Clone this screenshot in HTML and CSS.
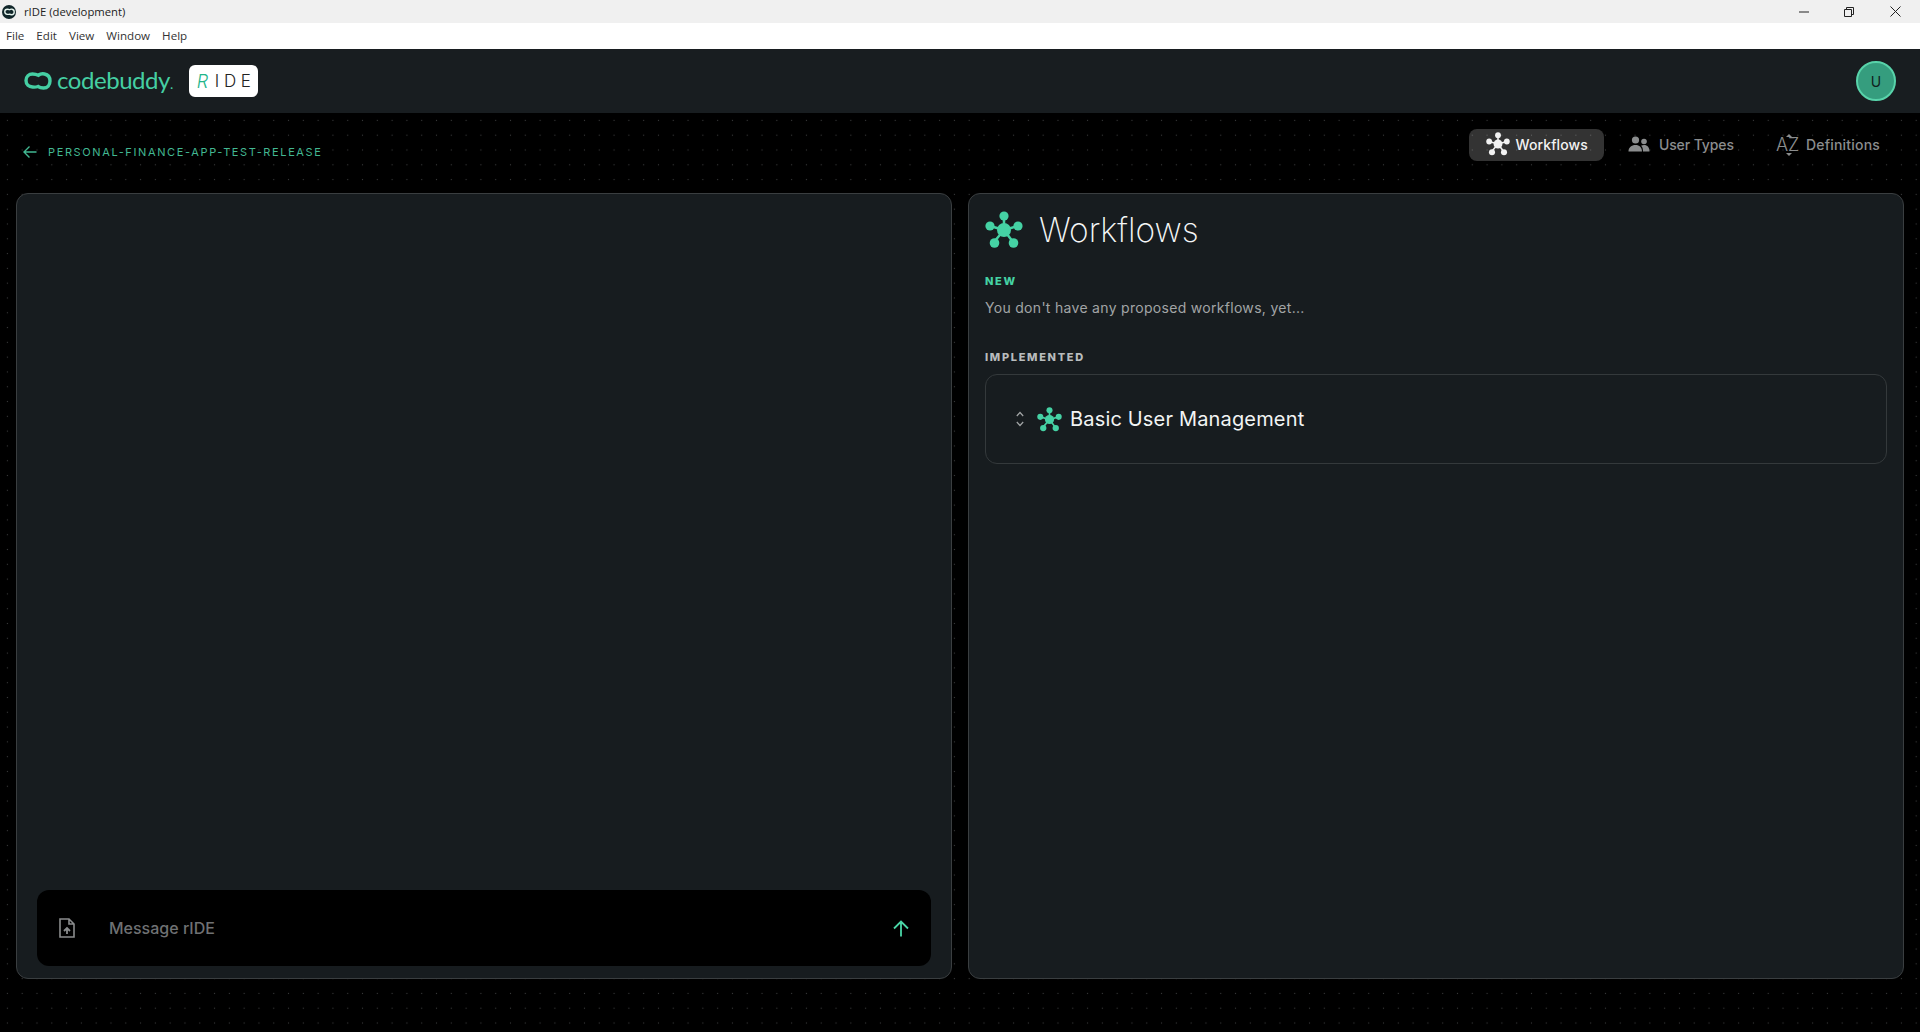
FILE: index.html
```html
<!DOCTYPE html>
<html lang="en">
  <head>
    <meta charset="UTF-8" />
    <title>rIDE (development)</title>
    <link rel="stylesheet" href="styles.css">
  </head>

  <body>
    <svg class="defs" width="0" height="0">
      <symbol id="flow" viewBox="0 0 38 38">
        <path d="M19 5V19M5 15L19 19M33 15L19 19M9 31L19 19M28 31L19 19" stroke="currentColor" stroke-width="2.5" fill="none"/>
        <circle cx="19" cy="19" r="7"/>
        <circle cx="19" cy="5" r="4.6"/>
        <circle cx="5" cy="15" r="4.6"/>
        <circle cx="33" cy="15" r="4.6"/>
        <circle cx="9.5" cy="32" r="4.8"/>
        <circle cx="28.5" cy="32" r="4.8"/>
      </symbol>
      <symbol id="loop" viewBox="0 0 28 20">
        <path d="M8.500 3C11 3 12.800 3.500 14.300 4.300C16 3 18 2.500 20.500 3C24 3.700 26 6.500 26 10C26 14 23.500 17 19.500 17C17.300 17 15.500 16.500 14 15.500C12.500 16 10.800 16.300 8.500 16C5 15.700 2 13.500 2 9.500C2 5.500 5 3 8.500 3Z" stroke="currentColor" stroke-width="3.400" fill="none"/>
      </symbol>
    </svg>

    <div class="titlebar">
      <div class="app-icon"><svg width="11" height="8"><use href="#loop"/></svg></div>
      <span class="title-text">rIDE (development)</span>
      <div class="win-btns">
        <svg width="10" height="10" viewBox="0 0 10 10"><path d="M0 5H10" stroke="#222" fill="none"/></svg>
        <svg width="10" height="10" viewBox="0 0 10 10"><path d="M0.500 2.500H7.500V9.500H0.500ZM2.500 2.500V0.500H9.500V7.500H7.500" stroke="#222" fill="none"/></svg>
        <svg class="win-close" width="11" height="11" viewBox="0 0 11 11"><path d="M0.500 0.500L10.500 10.500M10.500 0.500L0.500 10.500" stroke="#222" fill="none"/></svg>
      </div>
    </div>

    <div class="menubar">
      <span>File</span>
      <span>Edit</span>
      <span>View</span>
      <span>Window</span>
      <span>Help</span>
    </div>

    <header class="header">
      <div class="brand">
        <svg class="brand-mark" width="28" height="20"><use href="#loop"/></svg>
        <span class="brand-name">codebuddy<small>.</small></span>
        <div class="badge"><span class="badge-r">R</span>IDE</div>
      </div>
      <div class="avatar">U</div>
    </header>

    <main class="page">
      <div class="subnav">
        <a class="back">
          <svg width="14" height="14" viewBox="0 0 14 14"><path d="M13.500 7H1M6.500 1.500L1 7L6.500 12.500" stroke="currentColor" stroke-width="1.400" fill="none"/></svg>
          personal-finance-app-test-release
        </a>
        <nav class="tabs">
          <div class="tab active">
            <svg class="tab-icon" width="24" height="24"><use href="#flow"/></svg>
            Workflows
          </div>
          <div class="tab types">
            <svg class="tab-icon" width="22" height="16" viewBox="0 0 22 16">
              <circle cx="7.500" cy="4" r="3.600"/>
              <circle cx="16" cy="5.500" r="2.800"/>
              <path d="M0.500 15.500C0.500 11.500 3.500 9 7.500 9C11.500 9 14 11.500 14 15.500ZM15 15.500C15 13 14.500 11 13 9.800C14 9.200 15 9 16 9C19.500 9 21.500 11.500 21.500 15.500Z"/>
            </svg>
            User Types
          </div>
          <div class="tab defs-tab">
            <span class="az">AZ</span>
            Definitions
          </div>
        </nav>
      </div>

      <div class="panels">
        <section class="panel chat">
          <div class="composer">
            <svg class="file-icon" width="16" height="20" viewBox="0 0 16 20">
              <path d="M1 1H10L15 6V19H1Z M10 1V6H15" stroke="currentColor" stroke-width="1.600" fill="none"/>
              <path d="M8 16V10.500M5 13L8 10L11 13" stroke="currentColor" stroke-width="1.800" fill="none"/>
            </svg>
            <span class="placeholder">Message rIDE</span>
            <svg class="send" width="16" height="17" viewBox="0 0 16 17"><path d="M8 16.500V1.500M1 8.500L8 1.500L15 8.500" stroke="currentColor" stroke-width="1.800" fill="none"/></svg>
          </div>
        </section>

        <section class="panel flows">
          <div class="flows-head">
            <svg class="flows-icon" width="38" height="38"><use href="#flow"/></svg>
            <h1>Workflows</h1>
          </div>
          <h2 class="label new">New</h2>
          <p class="empty">You don't have any proposed workflows, yet...</p>
          <h2 class="label done">Implemented</h2>
          <div class="card">
            <svg class="chevrons" width="8" height="16" viewBox="0 0 8 16"><path d="M0.800 5L4 1.500L7.200 5M0.800 11L4 14.500L7.200 11" stroke="currentColor" stroke-width="1.200" fill="none"/></svg>
            <svg class="card-icon" width="25" height="25"><use href="#flow"/></svg>
            <span class="card-title">Basic User Management</span>
          </div>
        </section>
      </div>
    </main>
  </body>
</html>
```

FILE: styles.css
```css
* {
    box-sizing: border-box;
    margin: 0;
    padding: 0;
}
html, body {
    height: 100%;
}
body {
    display: flex;
    flex-direction: column;
    overflow: hidden;
    font-family: "Inter", "Liberation Sans", sans-serif;
    background-color: #000;
}
.defs {
    position: absolute;
}

/* window chrome */
.titlebar {
    height: 23px;
    flex: none;
    display: flex;
    align-items: center;
    padding-left: 2px;
    background-color: #f0f0f0;
    font-family: "Open Sans", "Liberation Sans", sans-serif;
    font-size: 11.300px;
    color: #222;
}
.app-icon {
    width: 14px;
    height: 14px;
    border-radius: 50%;
    background-color: #11262a;
    display: flex;
    align-items: center;
    justify-content: center;
    color: #e6f5ef;
}
.title-text {
    margin-left: 8px;
}
.win-btns {
    margin-left: auto;
    display: flex;
    align-items: center;
    gap: 35px;
    padding-right: 19px;
}
.win-close {
    margin-left: 1px;
}
.menubar {
    height: 26px;
    flex: none;
    display: flex;
    align-items: center;
    gap: 12px;
    padding: 0 0 2px 6px;
    background-color: #fff;
    font-family: "Open Sans", "Liberation Sans", sans-serif;
    font-size: 11.600px;
    color: #333;
}

/* app header */
.header {
    height: 64px;
    flex: none;
    display: flex;
    align-items: center;
    justify-content: space-between;
    padding: 0 24px;
    background-color: #181d20;
}
.brand {
    display: flex;
    align-items: center;
}
.brand-mark {
    color: #45cfa3;
}
.brand-name {
    margin: 0 0 4px 5px;
    font-family: "Lato", sans-serif;
    font-size: 24px;
    letter-spacing: -0.450px;
    color: #45cfa3;
}
.brand-name small {
    font-size: 14px;
}
.badge {
    width: 69px;
    height: 32px;
    margin-left: 16px;
    display: flex;
    align-items: center;
    padding-left: 8px;
    border-radius: 6px;
    background-color: #fff;
    font-size: 17px;
    font-weight: 300;
    letter-spacing: 4.600px;
    color: #222;
}
.badge-r {
    width: 18px;
    font-style: italic;
    font-size: 18px;
    letter-spacing: 0;
    color: #22b58a;
}
.avatar {
    width: 40px;
    height: 40px;
    border: 2px solid #58d3aa;
    border-radius: 50%;
    background-color: #359d7e;
    display: flex;
    align-items: center;
    justify-content: center;
    font-size: 14px;
    color: #10211d;
}

/* dotted page */
.page {
    flex: 1;
    display: flex;
    flex-direction: column;
    padding: 0 16px 53px;
    background-image: radial-gradient(circle, #3c3d3e 0.7px, transparent 1px);
    background-size: 14.800px 14.800px;
}
.subnav {
    height: 80px;
    flex: none;
    display: flex;
    justify-content: space-between;
    padding-top: 16px;
}
.back {
    display: flex;
    align-items: center;
    height: 14px;
    margin: 16px 0 0 7px;
    gap: 11px;
    font-size: 11px;
    letter-spacing: 1.620px;
    text-transform: uppercase;
    color: #42b892;
}
.tabs {
    display: flex;
    gap: 10px;
    padding-right: 8px;
    align-items: flex-start;
}
.tab {
    height: 32px;
    display: flex;
    align-items: center;
    gap: 6px;
    padding: 0 16px 2px;
    border-radius: 8px;
    font-size: 14px;
    font-weight: 500;
    color: #8b8d8e;
}
.tab.active {
    margin-right: -2px;
    padding-left: 17px;
    background-color: rgba(255, 255, 255, 0.2);
    letter-spacing: 0.100px;
    color: #f2f2f2;
}
.tab-icon {
    fill: currentColor;
}
.tab.types {
    gap: 9px;
    letter-spacing: -0.100px;
}
.tab.defs-tab {
    letter-spacing: 0.200px;
}
.az {
    position: relative;
    width: 22px;
    margin-right: 2px;
    font-size: 18px;
    font-weight: 300;
    letter-spacing: 0;
}
.az::before, .az::after {
    content: "";
    position: absolute;
    left: 10px;
    border-left: 3px solid transparent;
    border-right: 3px solid transparent;
}
.az::before {
    top: 0;
    border-bottom: 3px solid #8b8d8e;
}
.az::after {
    bottom: -1px;
    border-top: 3px solid #8b8d8e;
}

/* panels */
.panels {
    flex: 1;
    display: grid;
    grid-template-columns: 1fr 1fr;
    gap: 16px;
}
.panel {
    border: 1px solid #3a3e40;
    border-radius: 12px;
    background-color: #171c1f;
}
.chat {
    display: flex;
    flex-direction: column;
    justify-content: flex-end;
    padding: 0 20px 12px;
}
.composer {
    height: 76px;
    display: flex;
    align-items: center;
    padding: 0 22px;
    border-radius: 12px;
    background-color: #000;
}
.file-icon {
    color: #8a8c8d;
}
.placeholder {
    margin-left: 34px;
    font-size: 16px;
    font-weight: 500;
    color: #6f7173;
}
.send {
    margin-left: auto;
    color: #4ad6a7;
}
.flows {
    padding: 16px;
}
.flows-head {
    display: flex;
    align-items: center;
    gap: 16px;
    height: 40px;
}
.flows-icon {
    fill: #45d2a4;
    color: #45d2a4;
}
.flows-head h1 {
    font-size: 33.500px;
    font-weight: 200;
    color: #f4f6f6;
}
.label {
    font-size: 11px;
    font-weight: 800;
    letter-spacing: 1.700px;
    text-transform: uppercase;
}
.label.new {
    margin-top: 24px;
    color: #45d2a4;
}
.label.done {
    margin-top: 34px;
    color: #b9bcbd;
}
.empty {
    margin-top: 11px;
    font-size: 14px;
    letter-spacing: 0.300px;
    color: #a2a5a6;
}
.card {
    height: 90px;
    margin-top: 10px;
    display: flex;
    align-items: center;
    padding-left: 30px;
    border: 1px solid #34393b;
    border-radius: 12px;
}
.chevrons {
    color: #a2a5a6;
}
.card-icon {
    margin-left: 13px;
    fill: #45d2a4;
    color: #45d2a4;
}
.card-title {
    margin-left: 8px;
    font-size: 20px;
    font-weight: 400;
    letter-spacing: 0.170px;
    color: #f2f4f4;
}
```
